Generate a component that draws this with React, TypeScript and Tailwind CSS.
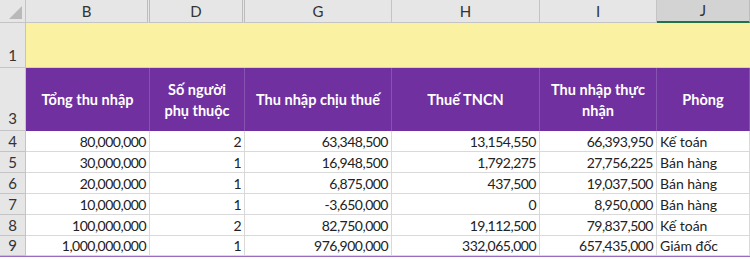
import React from "react";

const cols = [
  { key: "B", w: 124, dbl: true },
  { key: "D", w: 95, dbl: true },
  { key: "G", w: 147 },
  { key: "H", w: 148 },
  { key: "I", w: 117 },
  { key: "J", w: 93 },
];

const headers = [
  "Tổng thu nhập",
  "Số người phụ thuộc",
  "Thu nhập chịu thuế",
  "Thuế TNCN",
  "Thu nhập thực nhận",
  "Phòng",
];

const rows: [number, string, string, string, string, string, string][] = [
  [4, "80,000,000", "2", "63,348,500", "13,154,550", "66,393,950", "Kế toán"],
  [5, "30,000,000", "1", "16,948,500", "1,792,275", "27,756,225", "Bán hàng"],
  [6, "20,000,000", "1", "6,875,000", "437,500", "19,037,500", "Bán hàng"],
  [7, "10,000,000", "1", "-3,650,000", "0", "8,950,000", "Bán hàng"],
  [8, "100,000,000", "2", "82,750,000", "19,112,500", "79,837,500", "Kế toán"],
  [9, "1,000,000,000", "1", "976,900,000", "332,065,000", "657,435,000", "Giám đốc"],
];

const font = { fontFamily: "Lato, 'Noto Sans', 'Liberation Sans', sans-serif" };

export default function App() {
  return (
    <div className="w-[750px] h-[260px] overflow-hidden bg-white text-[#222]" style={font}>
      {/* column header row */}
      <div className="flex h-[23px]">
        <div className="w-[26px] shrink-0 bg-[#e6e6e6] border-r border-b border-[#c4c4c4] flex items-end justify-end pr-[3px] pb-[3px]">
          <div className="w-0 h-0 border-l-[13px] border-l-transparent border-b-[13px] border-b-[#b9b9b9]" />
        </div>
        {cols.map((c) => (
          <div
            key={c.key}
            style={{ width: c.w }}
            className={
              "shrink-0 flex items-center justify-center text-[15px] text-[#333] " +
              (c.key === "J"
                ? "bg-[#d3d3d3] border-b-2 border-b-[#217346] border-r border-r-[#bdbdbd]"
                : "bg-[#e6e6e6] border-b border-b-[#c4c4c4] " +
                  (c.dbl ? "border-r-[3px] border-double border-r-[#bdbdbd]" : "border-r border-r-[#c4c4c4]"))
            }
          >
            {c.key}
          </div>
        ))}
      </div>

      {/* row 1 yellow */}
      <div className="flex h-[45px]">
        <div className="w-[26px] shrink-0 bg-[#e6e6e6] border-r border-b border-[#c4c4c4] flex items-end justify-center pb-[1px] text-[15px] text-[#333]">
          1
        </div>
        <div className="flex-1 bg-[#faf1a3] border-b border-[#e0d48a]" />
      </div>

      {/* row 3 purple header */}
      <div className="flex h-[63px]">
        <div className="w-[26px] shrink-0 bg-[#e6e6e6] border-r border-b border-[#c4c4c4] flex items-end justify-center pb-[1px] text-[15px] text-[#333]">
          3
        </div>
        {cols.map((c, i) => (
          <div
            key={c.key}
            style={{ width: c.w }}
            className="shrink-0 bg-[#7030a0] border-r border-[#8753b0] flex items-center justify-center text-center text-white font-bold text-[14.5px] leading-[21px] px-[8px]"
          >
            {headers[i]}
          </div>
        ))}
      </div>

      {/* data rows */}
      {rows.map((r, ri) => (
        <div key={r[0]} className={"flex h-[21px] " + (ri === rows.length - 1 ? "border-b border-[#9a6cc0]" : "")}>
          <div className="w-[26px] shrink-0 bg-[#e6e6e6] border-r border-b border-[#c4c4c4] flex items-end justify-center text-[15px] leading-[19px] text-[#333]">
            {r[0]}
          </div>
          {cols.map((c, ci) => (
            <div
              key={c.key}
              style={{ width: c.w }}
              className={
                "shrink-0 border-r border-b border-[#d9d9d9] flex items-end text-[14px] leading-[19px] " +
                (ci === 5 ? "justify-start pl-[3px]" : "justify-end pr-[3px] tracking-[-0.5px]")
              }
            >
              {r[ci + 1]}
            </div>
          ))}
        </div>
      ))}
    </div>
  );
}
